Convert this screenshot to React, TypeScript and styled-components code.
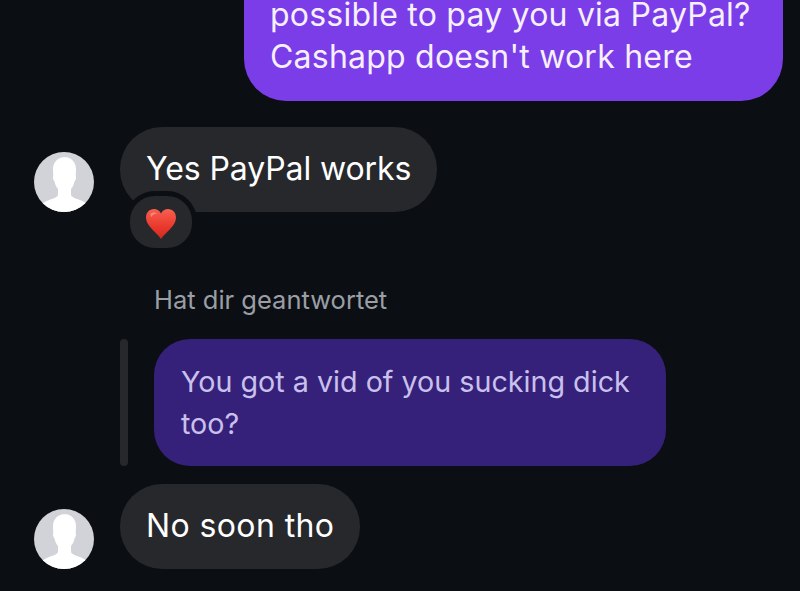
import styled, { createGlobalStyle } from 'styled-components'

const GlobalStyle = createGlobalStyle`
  html, body {
    margin: 0;
    background-color: #0b0e13;
  }
`

const Thread = styled.div`
  display: flex;
  flex-direction: column;
  justify-content: flex-end;

  height: 591px;
  padding-bottom: 22px;
  box-sizing: border-box;
  overflow: hidden;

  background-color: #0b0e13;
  font-family: Inter, 'Liberation Sans', sans-serif;
  font-size: 32px;
  line-height: 42px;
`

const SentBubble = styled.div`
  flex-shrink: 0;
  align-self: flex-end;

  width: 539px;
  margin: 0 17px 26px 0;
  padding: 20px 26px 23px;
  box-sizing: border-box;

  background-color: #7a3de8;
  border-radius: 0 0 42px 42px;
  color: #f6effe;
  letter-spacing: 0.22px;
`

const Row = styled.div<{ $after?: number }>`
  display: flex;
  align-items: flex-end;
  gap: 26px;

  flex-shrink: 0;
  margin-left: 34px;
  margin-bottom: ${({ $after }) => $after ?? 0}px;
`

const Avatar = styled.svg`
  display: block;
  flex-shrink: 0;
  width: 60px;
  height: 60px;
`

const Bubble = styled.div<{ $tracking?: number }>`
  position: relative;

  padding: 21px 26px 22px;

  background-color: #26282c;
  border-radius: 42px;
  color: #ffffff;
  letter-spacing: ${({ $tracking }) => $tracking ?? 0}px;
  white-space: nowrap;
`

const Reaction = styled.div`
  position: absolute;
  left: 5px;
  top: 64px;

  display: flex;
  align-items: center;
  justify-content: center;

  width: 62px;
  height: 52px;

  background-color: #26282c;
  border: 5px solid #0b0e13;
  border-radius: 30px;
`

const Heart = styled.svg`
  display: block;
  width: 30px;
  height: 32px;
  margin-top: 3px;
`

const ReplyLabel = styled.div`
  flex-shrink: 0;

  margin: 0 0 24px 154px;

  color: #9a9ea5;
  font-size: 25.5px;
  line-height: 30px;
`

const Reply = styled.div`
  display: flex;
  gap: 26px;

  flex-shrink: 0;
  margin: 0 0 18px 120px;
`

const ReplyBar = styled.div`
  width: 8px;

  background-color: #26282c;
  border-radius: 4px;
`

const ReplyBubble = styled.div`
  width: 512px;
  padding: 22px 27px 21px;
  box-sizing: border-box;

  background-color: #35217a;
  border-radius: 36px;
  color: #c9c0ec;
  font-size: 28.7px;
`

const ContactAvatar = () => (
  <Avatar viewBox="0 0 60 60">
    <defs>
      <clipPath id="avatar-clip">
        <circle cx="30" cy="30" r="30" />
      </clipPath>
    </defs>
    <g clipPath="url(#avatar-clip)">
      <rect width="60" height="60" fill="#d2d3d8" />
      <path
        fill="#ffffff"
        d="M31 5c-7 0-12 5-12 12 0 3 .2 5 .3 7-.5 1-.4 3 .3 4 .8 1 1 2 1.400 3.500.5 2 1.800 4 3 5.500v5c0 1.500-.5 2.500-2 3.200-3 1.500-8 3-11.500 5-2 1.200-3 3-3 4.800v6h46v-6c0-2-1-3.600-3-4.800-3.500-2-8.500-3.500-11.500-5-1.500-.7-2-1.700-2-3.200v-5c1.200-1.500 2.500-3.500 3-5.500.4-1.500.6-2.500 1.400-3.500.7-1 .8-3 .3-4 .1-2 .3-4 .3-7 0-7-5-12-11.500-12z"
      />
    </g>
  </Avatar>
)

const RedHeart = () => (
  <Heart viewBox="0 0 30 32">
    <defs>
      <linearGradient id="heart-fill" x1="0" y1="0" x2="0" y2="1">
        <stop offset="0" stopColor="#f8604f" />
        <stop offset="0.6" stopColor="#e8382c" />
        <stop offset="1" stopColor="#cf2a22" />
      </linearGradient>
    </defs>
    <path
      fill="url(#heart-fill)"
      d="M15 31C13.500 28.500 9 24.500 5 20 2 16.500 0 13.500 0 9.500 0 4.500 3.500 1 8 1c3 0 5.500 1.500 7 4.500C16.500 2.500 19 1 22 1c4.500 0 8 3.500 8 8.500 0 4-2 7-5 10.500-4 4.500-8.500 8.500-10 11z"
    />
    <path
      fill="#ffffff"
      opacity="0.3"
      d="M5 5.500C6.500 4 9.500 4 11 6c-2.500-.5-4.500.5-5.500 3C4.500 8 4.200 6.500 5 5.500z"
    />
  </Heart>
)

const App = () => (
  <>
    <GlobalStyle />
    <Thread>
      <SentBubble>
        possible to pay you via PayPal?
        <br />
        Cashapp doesn't work here
      </SentBubble>
      <Row $after={73}>
        <ContactAvatar />
        <Bubble $tracking={-0.1}>
          Yes PayPal works
          <Reaction>
            <RedHeart />
          </Reaction>
        </Bubble>
      </Row>
      <ReplyLabel>Hat dir geantwortet</ReplyLabel>
      <Reply>
        <ReplyBar />
        <ReplyBubble>You got a vid of you sucking dick too?</ReplyBubble>
      </Reply>
      <Row>
        <ContactAvatar />
        <Bubble $tracking={0.4}>No soon tho</Bubble>
      </Row>
    </Thread>
  </>
)

export default App
